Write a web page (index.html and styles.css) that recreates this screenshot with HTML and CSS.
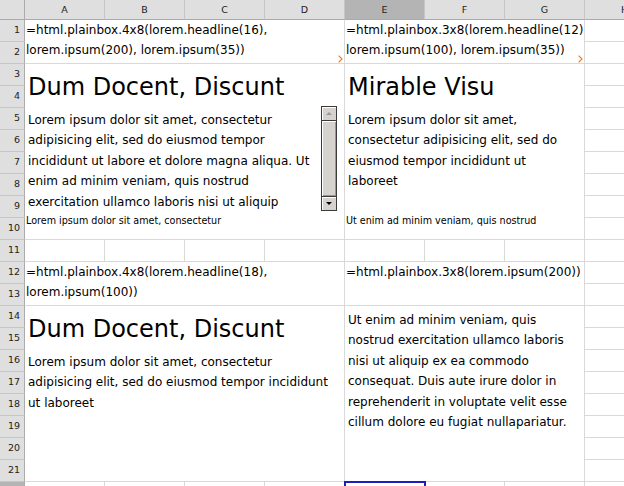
FILE: index.html
```html
<!DOCTYPE html>
<html>
<head>
<meta charset="utf-8">
<title>Sheet</title>
<link rel="stylesheet" href="styles.css">
</head>
<body>
<div class="sheet">
  <div class="ch corner"></div>
  <div class="ch">A</div>
  <div class="ch">B</div>
  <div class="ch">C</div>
  <div class="ch">D</div>
  <div class="ch on">E</div>
  <div class="ch">F</div>
  <div class="ch">G</div>
  <div class="ch">H</div>

  <div class="rh">1</div>
  <div class="cell m4x2 fcell">=html.plainbox.4x8(lorem.headline(16),<br>lorem.ipsum(200), lorem.ipsum(35))<svg class="more" width="5" height="8" viewBox="0 0 5 8"><polyline points="0.6,0.6 4,4 0.6,7.4" fill="none" stroke="#e2822f" stroke-width="1.2"/></svg></div>
  <div class="cell m3x2 fcell">=html.plainbox.3x8(lorem.headline(12),<br>lorem.ipsum(100), lorem.ipsum(35))<svg class="more" width="5" height="8" viewBox="0 0 5 8"><polyline points="0.6,0.6 4,4 0.6,7.4" fill="none" stroke="#e2822f" stroke-width="1.2"/></svg></div>
  <div class="cell"></div>
  <div class="rh">2</div>
  <div class="cell"></div>

  <div class="rh">3</div>
  <div class="cell m4x8 hbox">
    <div class="hl">Dum Docent, Discunt</div>
    <div class="scroll sc1">
      <div class="ptext">Lorem ipsum dolor sit amet, consectetur adipisicing elit, sed do eiusmod tempor incididunt ut labore et dolore magna aliqua. Ut enim ad minim veniam, quis nostrud exercitation ullamco laboris nisi ut aliquip</div>
      <div class="sb">
        <div class="sb-btn"><span class="tri up"></span></div>
        <div class="sb-thumb"></div>
        <div class="sb-btn dn"><span class="tri down"></span></div>
      </div>
    </div>
    <div class="small">Lorem ipsum dolor sit amet, consectetur</div>
  </div>
  <div class="cell m3x8 hbox">
    <div class="hl">Mirable Visu</div>
    <div class="scroll sc2">
      <div class="ptext">Lorem ipsum dolor sit amet, consectetur adipisicing elit, sed do eiusmod tempor incididunt ut laboreet</div>
    </div>
    <div class="small">Ut enim ad minim veniam, quis nostrud</div>
  </div>
  <div class="cell"></div>
  <div class="rh">4</div><div class="cell"></div>
  <div class="rh">5</div><div class="cell"></div>
  <div class="rh">6</div><div class="cell"></div>
  <div class="rh">7</div><div class="cell"></div>
  <div class="rh">8</div><div class="cell"></div>
  <div class="rh">9</div><div class="cell"></div>
  <div class="rh">10</div><div class="cell"></div>

  <div class="rh">11</div>
  <div class="cell"></div><div class="cell"></div><div class="cell"></div><div class="cell"></div>
  <div class="cell"></div><div class="cell"></div><div class="cell"></div><div class="cell"></div>

  <div class="rh">12</div>
  <div class="cell m4x2 fcell">=html.plainbox.4x8(lorem.headline(18),<br>lorem.ipsum(100))</div>
  <div class="cell m3x2 fcell">=html.plainbox.3x8(lorem.ipsum(200))</div>
  <div class="cell"></div>
  <div class="rh">13</div>
  <div class="cell"></div>

  <div class="rh">14</div>
  <div class="cell m4x8 hbox">
    <div class="hl">Dum Docent, Discunt</div>
    <div class="ptext p3">Lorem ipsum dolor sit amet, consectetur adipisicing elit, sed do eiusmod tempor incididunt ut laboreet</div>
  </div>
  <div class="cell m3x8 hbox">
    <div class="ptext p4">Ut enim ad minim veniam, quis nostrud exercitation ullamco laboris nisi ut aliquip ex ea commodo consequat. Duis aute irure dolor in reprehenderit in voluptate velit esse cillum dolore eu fugiat nullapariatur.</div>
  </div>
  <div class="cell"></div>
  <div class="rh">15</div><div class="cell"></div>
  <div class="rh">16</div><div class="cell"></div>
  <div class="rh">17</div><div class="cell"></div>
  <div class="rh">18</div><div class="cell"></div>
  <div class="rh">19</div><div class="cell"></div>
  <div class="rh">20</div><div class="cell"></div>
  <div class="rh">21</div><div class="cell"></div>

  <div class="rh on">22</div>
  <div class="cell"></div><div class="cell"></div><div class="cell"></div><div class="cell"></div>
  <div class="cell sel"><div class="cursor"></div></div><div class="cell"></div><div class="cell"></div><div class="cell"></div>
</div>
</body>
</html>
```

FILE: styles.css
```css
html, body {
  margin: 0;
  padding: 0;
}
body {
  width: 624px;
  height: 486px;
  overflow: hidden;
  background: #ffffff;
  font-family: "DejaVu Sans", "Liberation Sans", sans-serif;
  color: #000000;
}
.sheet {
  display: grid;
  grid-template-columns: 25px repeat(8, 80px);
  grid-template-rows: 20px repeat(22, 22px);
  width: 665px;
}
.cell {
  box-sizing: border-box;
  border-right: 1px solid #d9d9d9;
  border-bottom: 1px solid #d9d9d9;
  position: relative;
  overflow: hidden;
  min-width: 0;
  min-height: 0;
}
.sel {
  overflow: visible;
}
.cursor {
  position: absolute;
  left: -1px;
  top: -1px;
  width: 82px;
  height: 24px;
  box-sizing: border-box;
  border: 2px solid #1c1cc8;
}
.ch {
  box-sizing: border-box;
  background: #dfdfdf;
  border-right: 1px solid #c6c6c6;
  border-bottom: 1px solid #ababab;
  font-size: 9.5px;
  color: #222222;
  display: flex;
  align-items: center;
  justify-content: center;
}
.ch.corner {
  border-right-color: #ababab;
}
.ch.on {
  background: #b4b4b4;
}
.rh {
  box-sizing: border-box;
  background: #dfdfdf;
  border-right: 1px solid #ababab;
  border-bottom: 1px solid #c6c6c6;
  font-size: 9.5px;
  color: #222222;
  display: flex;
  align-items: center;
  justify-content: flex-end;
  padding: 0 4px 3px 0;
}
.rh.on {
  background: #b4b4b4;
}
.m4x2 {
  grid-column: span 4;
  grid-row: span 2;
}
.m3x2 {
  grid-column: span 3;
  grid-row: span 2;
}
.m4x8 {
  grid-column: span 4;
  grid-row: span 8;
}
.m3x8 {
  grid-column: span 3;
  grid-row: span 8;
}
.fcell {
  font-size: 12px;
  line-height: 19.5px;
  padding: 1px 0 0 1px;
  white-space: nowrap;
}
.more {
  position: absolute;
  right: 1px;
  top: 35px;
}
.hbox {
  display: flex;
  flex-direction: column;
}
.hl {
  font-size: 24px;
  line-height: 28px;
  margin-top: 9px;
  padding-left: 3px;
  white-space: nowrap;
}
.scroll {
  display: flex;
  height: 105px;
  margin-top: 5px;
  padding-left: 3px;
  flex: none;
}
.sc1 {
  padding-right: 7px;
}
.sc2 {
  padding-right: 10px;
}
.ptext {
  font-size: 12px;
  line-height: 20.4px;
  flex: 1;
  min-width: 0;
  overflow: hidden;
}
.scroll .ptext {
  padding-top: 4px;
}
.p3 {
  margin-top: 9px;
  padding: 0 10px 0 3px;
}
.p4 {
  padding: 4px 10px 0 3px;
}
.small {
  font-size: 9.6px;
  margin-top: 4px;
  padding-left: 1px;
  white-space: nowrap;
}
.sb {
  width: 16px;
  flex: none;
  box-sizing: border-box;
  border: 1px solid #3a3a3a;
  background: #d6d3ce;
  display: flex;
  flex-direction: column;
}
.sb-btn {
  height: 14px;
  flex: none;
  box-sizing: border-box;
  border-bottom: 1px solid #3a3a3a;
  box-shadow: inset 1px 1px 0 #ffffff;
  display: flex;
  align-items: center;
  justify-content: center;
}
.sb-btn.dn {
  border-bottom: none;
  border-top: 1px solid #3a3a3a;
}
.sb-thumb {
  flex: 1;
  box-shadow: inset 1px 1px 0 #ffffff, inset -1px -1px 0 #9a9893;
}
.tri {
  width: 0;
  height: 0;
  border-left: 3px solid transparent;
  border-right: 3px solid transparent;
}
.tri.up {
  border-bottom: 3px solid #9a9a9a;
}
.tri.down {
  border-top: 3px solid #000000;
}
```
